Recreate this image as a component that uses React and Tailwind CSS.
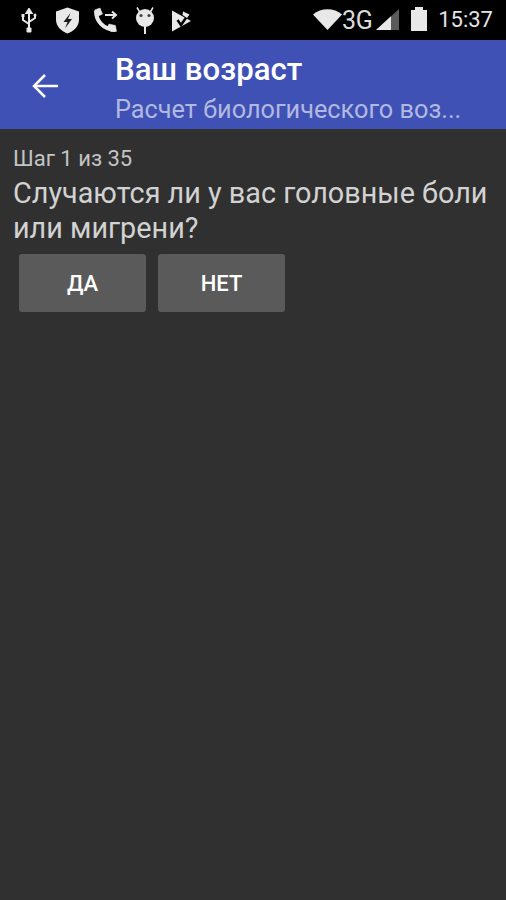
import React from 'react';

const StatusBar = () => (
    <div className="h-10 bg-black flex items-center text-[#e8e8e8] shrink-0">
        <div className="flex items-center ml-[21px]">
            {/* usb */}
            <svg width="16" height="26" viewBox="0 0 16 26" fill="none" stroke="#e8e8e8" strokeWidth="2" className="mt-[1px]">
                <path d="M8 2v18" />
                <path d="M5.500 5L8 1 10.500 5z" fill="#e8e8e8" />
                <path d="M2 8v4l6 4M14 7v3l-6 4" />
                <rect x="0.500" y="6" width="3" height="3" fill="#e8e8e8" stroke="none" />
                <circle cx="14" cy="7" r="1.500" fill="#e8e8e8" stroke="none" />
                <rect x="5.500" y="19.500" width="5" height="5" rx="1" fill="#e8e8e8" stroke="none" />
            </svg>
            {/* shield */}
            <svg width="25" height="27" viewBox="0 0 25 27" className="ml-[18px]">
                <path d="M12.500 0.500l11.500 4v8c0 7-5 11.500-11.500 14C6 24 1 19.500 1 12.500v-8z" fill="#e8e8e8" />
                <path d="M15.500 6l-7 9h4l-2.500 6.500 7-9.500h-4z" fill="#1a1a1a" />
            </svg>
            {/* call */}
            <svg width="26" height="26" viewBox="0 0 26 26" fill="none" stroke="#e8e8e8" className="ml-[12px]">
                <path d="M4 4C4 14 11 22 23 23" strokeWidth="4" />
                <path d="M2.500 3L8 1l2.500 6-4 2zM24.500 24.500l-1-6-6.500-1.500-2 4 4 3.500z" fill="#e8e8e8" strokeWidth="0.500" />
                <path d="M13 8h10" strokeWidth="2" />
                <path d="M20 4.500L24 8l-4 3.500" strokeWidth="2" />
            </svg>
            {/* android */}
            <svg width="22" height="28" viewBox="0 0 22 28" className="ml-[16px] mt-[2px]">
                <path d="M3 0.500l3 5M19 0.500l-3 5" stroke="#e8e8e8" strokeWidth="1.500" />
                <circle cx="11" cy="11" r="9" fill="#e8e8e8" />
                <circle cx="7" cy="8.500" r="1.600" fill="#444" />
                <circle cx="15" cy="8.500" r="1.600" fill="#444" />
                <rect x="10" y="18" width="2" height="9" fill="#e8e8e8" />
            </svg>
            {/* check flag */}
            <svg width="22" height="22" viewBox="0 0 22 22" className="ml-[14px] mt-[1px]">
                <path d="M2 0.500L21 11 2 21.500z" fill="#e8e8e8" />
                <path d="M7.500 10l3.500 5L20 2" fill="none" stroke="#000" strokeWidth="2.500" />
                <path d="M13 1.500l6.500 3-2.500 3.500-4.500-3z" fill="#e8e8e8" />
            </svg>
        </div>
        <div className="flex items-center ml-auto mr-[13px]">
            <svg width="29" height="21" viewBox="0 0 29 21" className="-mt-[1px]">
                <path d="M0 5.500C8-1.500 21-1.500 29 5.500L14.500 21z" fill="#e8e8e8" />
            </svg>
            <span className="font-['Roboto',sans-serif] text-[25px] leading-none tracking-[-0.5px] text-[#dcdcdc]">3G</span>
            <svg width="23" height="21" viewBox="0 0 23 21" className="ml-[4px] -mt-[2px]">
                <path d="M0 21L23 0v21z" fill="#5a5a5a" />
                <path d="M0 21L15 7.300V21z" fill="#e8e8e8" />
            </svg>
            <svg width="16" height="24" viewBox="0 0 16 24" className="ml-[12px] -mt-[2px]">
                <path d="M0 3h4V0h8v3h4v21H0z" fill="#e8e8e8" />
            </svg>
            <span className="ml-[11px] font-['Roboto',sans-serif] text-[22px] leading-none text-[#e4e4e4]">15:37</span>
        </div>
    </div>
);

const App = () => {
    return (
        <div className="w-[506px] h-[900px] flex flex-col bg-[#303030] overflow-hidden font-['Roboto',sans-serif]">
            <StatusBar />
            <div className="h-[89px] bg-[#3f51b5] flex shrink-0">
                <div className="w-[115px] shrink-0 flex items-center pl-[32px] pt-[2px]">
                    <svg width="26" height="26" viewBox="0 0 26 26" fill="none" stroke="#fff" strokeWidth="2.500">
                        <path d="M26 13H2" />
                        <path d="M13 2L2 13l11 11" />
                    </svg>
                </div>
                <div className="flex flex-col min-w-0 w-[360px]">
                    <div className="text-white font-medium text-[31.200px] leading-[36px] mt-[12px]">Ваш возраст</div>
                    <div className="text-[#b2b9e1] text-[25.300px] leading-[30px] mt-[7px] whitespace-nowrap">Расчет биологического воз...</div>
                </div>
            </div>
            <div className="pl-[13px] pt-[18px]">
                <div className="text-[#c4c4c4] text-[22px] leading-[24px]">Шаг 1 из 35</div>
                <div className="text-[#d2d2d2] text-[28.800px] leading-[35px] mt-[5px] w-[485px]">Случаются ли у вас головные боли или мигрени?</div>
                <div className="flex gap-[12px] ml-[6px] mt-[8px]">
                    <button className="w-[127px] h-[58px] rounded-[3px] bg-[#5a5a5a] text-white font-medium text-[22px]">ДА</button>
                    <button className="w-[127px] h-[58px] rounded-[3px] bg-[#5a5a5a] text-white font-medium text-[22px]">НЕТ</button>
                </div>
            </div>
        </div>
    );
};

export default App;
